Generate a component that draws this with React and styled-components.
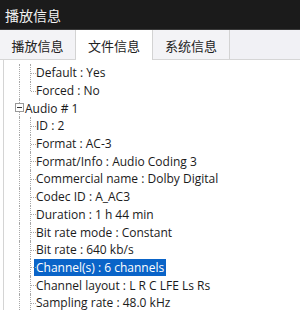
import React from "react";
import styled, { createGlobalStyle } from "styled-components";

const GlobalStyle = createGlobalStyle`
  html, body {
    margin: 0;
    padding: 0;
    background: #ffffff;
  }
  body {
    font-family: "Open Sans", "Noto Sans CJK SC", sans-serif;
  }
`;

const tabs = ["播放信息", "文件信息", "系统信息"];

const rows = [
  { text: "Default : Yes", level: 1 },
  { text: "Forced : No", level: 1, last: true },
  { text: "Audio # 1", level: 0, expander: true },
  { text: "ID : 2", level: 1 },
  { text: "Format : AC-3", level: 1 },
  { text: "Format/Info : Audio Coding 3", level: 1 },
  { text: "Commercial name : Dolby Digital", level: 1 },
  { text: "Codec ID : A_AC3", level: 1 },
  { text: "Duration : 1 h 44 min", level: 1 },
  { text: "Bit rate mode : Constant", level: 1 },
  { text: "Bit rate : 640 kb/s", level: 1 },
  { text: "Channel(s) : 6 channels", level: 1, selected: true },
  { text: "Channel layout : L R C LFE Ls Rs", level: 1 },
  { text: "Sampling rate : 48.0 kHz", level: 1 },
];

const App = () => {
  return (
    <>
      <GlobalStyle />
      <Window>
        <TitleBar>播放信息</TitleBar>
        <TabBar>
          {tabs.map((t, i) => (
            <Tab key={t} active={i === 1}>
              {t}
            </Tab>
          ))}
        </TabBar>
        <TreePanel>
          {rows.map((r) => (
            <Row key={r.text}>
              <RootGuide>{r.expander && <Expander />}</RootGuide>
              {r.level === 1 ? (
                <ChildGuide last={r.last} />
              ) : (
                <Spacer />
              )}
              <Label selected={r.selected}>{r.text}</Label>
            </Row>
          ))}
        </TreePanel>
      </Window>
    </>
  );
};

export default App;

const Window = styled.div`
  width: 300px;
  height: 310px;
  overflow: hidden;
  display: flex;
  flex-direction: column;
  background: #ffffff;
`;

const TitleBar = styled.div`
  height: 30px;
  flex: none;
  display: flex;
  align-items: center;
  padding-left: 5px;
  background: #1b1b1b;
  border-bottom: 1px solid #3a3a3a;
  color: #f2f2f2;
  font-size: 14px;
  box-sizing: border-box;
`;

const TabBar = styled.div`
  height: 30px;
  flex: none;
  display: flex;
  align-items: stretch;
  background: #f1f1f5;
  border-bottom: 1px solid #d6d6d6;
  box-sizing: border-box;
`;

const Tab = styled.div`
  width: 77px;
  display: flex;
  align-items: center;
  justify-content: center;
  padding-top: 1px;
  font-size: 13px;
  color: #222222;
  border-right: 1px solid #d3d3d3;
  background: ${(p) => (p.active ? "#ffffff" : "#f3f3f6")};
  margin-bottom: ${(p) => (p.active ? "-1px" : "0")};
  box-sizing: border-box;
  &:first-child {
    width: 76px;
  }
`;

const TreePanel = styled.div`
  flex: 1;
  margin-left: 3px;
  border-left: 1px solid #d4d4d4;
  padding-top: 4px;
  display: flex;
  flex-direction: column;
`;

const Row = styled.div`
  height: 17.7px;
  flex: none;
  display: flex;
  align-items: stretch;
  font-size: 12px;
  color: #1a1a1a;
`;

const RootGuide = styled.div`
  position: relative;
  width: 16px;
  flex: none;
  box-sizing: border-box;
  border-right: 1px dotted #a8a8a8;
`;

const Expander = styled.span`
  position: absolute;
  left: 11px;
  top: 4px;
  width: 9px;
  height: 9px;
  box-sizing: border-box;
  border: 1px solid #999999;
  background: #ffffff;
  &::after {
    content: "";
    position: absolute;
    left: 1px;
    right: 1px;
    top: 3px;
    height: 1px;
    background: #333333;
  }
`;

const Spacer = styled.div`
  width: 5px;
  flex: none;
`;

const ChildGuide = styled.div`
  position: relative;
  width: 6px;
  flex: none;
  margin-left: 10px;
  &::before {
    content: "";
    position: absolute;
    left: 0;
    top: 0;
    bottom: ${(p) => (p.last ? "50%" : "0")};
    border-left: 1px dotted #a8a8a8;
  }
  &::after {
    content: "";
    position: absolute;
    left: 1px;
    width: 5px;
    top: 50%;
    border-top: 1px dotted #a8a8a8;
  }
`;

const Label = styled.div`
  display: flex;
  align-items: center;
  white-space: nowrap;
  margin-left: ${(p) => (p.selected ? "-2px" : "0")};
  padding: ${(p) => (p.selected ? "0 2px" : "0")};
  background: ${(p) => (p.selected ? "#0a64c8" : "transparent")};
  color: ${(p) => (p.selected ? "#ffffff" : "inherit")};
`;
